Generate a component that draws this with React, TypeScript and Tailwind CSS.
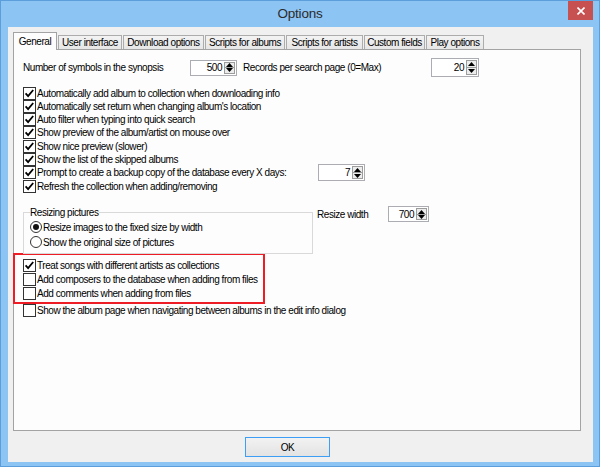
import type { ReactNode } from 'react';

function CheckBox({ checked }: { checked?: boolean }) {
  return (
    <svg width="13" height="13" viewBox="0 0 13 13" className="shrink-0">
      <rect x="0.5" y="0.5" width="12" height="12" fill="#fff" stroke="#333" />
      {checked && <path d="M2.6 6.4 L5.1 9.1 L10.2 3" fill="none" stroke="#000" strokeWidth="1.8" />}
    </svg>
  );
}

function Radio({ checked }: { checked?: boolean }) {
  return (
    <svg width="12" height="12" viewBox="0 0 12 12" className="shrink-0">
      <circle cx="6" cy="6" r="5.5" fill="#fff" stroke="#333" />
      {checked && <circle cx="6" cy="6" r="3" fill="#111" />}
    </svg>
  );
}

function Spin({ value, className }: { value: string; className: string }) {
  return (
    <div className={`flex shrink-0 border border-[#abadb3] bg-white ${className}`}>
      <span className="flex flex-1 items-center justify-end pr-[2px]">{value}</span>
      <div className="my-[1px] mr-[1px] flex w-[11px] flex-col border border-[#9c9c9c]">
        <div className="flex flex-1 items-center justify-center bg-[#ececec]">
          <svg width="7" height="4" viewBox="0 0 7 4"><path d="M0 4 L3.5 0 L7 4 Z" fill="#000" /></svg>
        </div>
        <div className="h-[1px] bg-[#9c9c9c]" />
        <div className="flex flex-1 items-center justify-center bg-[#ececec]">
          <svg width="7" height="4" viewBox="0 0 7 4"><path d="M0 0 L3.5 4 L7 0 Z" fill="#000" /></svg>
        </div>
      </div>
    </div>
  );
}

function CheckRow({ checked, children, h = 'h-[13.3px]' }: { checked?: boolean; children: ReactNode; h?: string }) {
  return (
    <div className={`flex items-center gap-[1px] ${h}`}>
      <CheckBox checked={checked} />
      <span className="whitespace-nowrap">{children}</span>
    </div>
  );
}

const tabs = [
  { label: 'User interface', w: 'w-[64px]' },
  { label: 'Download options', w: 'w-[81px]' },
  { label: 'Scripts for albums', w: 'w-[80px]' },
  { label: 'Scripts for artists', w: 'w-[77px]' },
  { label: 'Custom fields', w: 'w-[61px]' },
  { label: 'Play options', w: 'w-[58px]' },
];

export default function App() {
  return (
    <div className="h-[469px] w-[600px] bg-white font-['Liberation_Sans',Arial,sans-serif] text-[10px] tracking-[-0.45px] text-black">
      <div className="flex h-[467px] w-[600px] flex-col border border-[#5c9ddc] bg-[#8cc4f4]">
        {/* title bar */}
        <div className="flex h-[26px] shrink-0">
          <div className="w-[31px]" />
          <div className="flex flex-1 items-center justify-center text-[13.5px] tracking-[-0.2px] text-[#2b2b2b]">
            Options
          </div>
          <button className="mr-[6px] flex h-[19px] w-[25px] items-center justify-center bg-[#c75050]">
            <svg width="8" height="8" viewBox="0 0 8 8">
              <path d="M0.5 0.5 L7.5 7.5 M7.5 0.5 L0.5 7.5" stroke="#fff" strokeWidth="1.6" />
            </svg>
          </button>
        </div>

        {/* client area */}
        <div className="ml-[7px] h-[435px] w-[585px] shrink-0 bg-[#f0f0f0] pl-[5px] pt-[5px]">
          <div className="flex h-[17px] items-end">
            <div className="relative z-10 -mb-[1px] flex h-[18px] w-[44px] items-center justify-center border border-b-0 border-[#a3a3a3] bg-[#fdfdfd] pb-[1px]">
              General
            </div>
            {tabs.map((t) => (
              <div
                key={t.label}
                className={`ml-[1px] flex h-[14px] items-center justify-center border border-b-0 border-[#acacac] bg-gradient-to-b from-[#f3f3f3] to-[#e6e6e6] whitespace-nowrap ${t.w}`}
              >
                {t.label}
              </div>
            ))}
          </div>

          <div className="h-[382px] w-[568px] border border-[#a3a3a3] bg-[#fdfdfd] pl-[9px] pt-[8px]">
            <div className="flex h-[19px] items-center">
              <span className="w-[167px] whitespace-nowrap">Number of symbols in the synopsis</span>
              <Spin value="500" className="h-[16px] w-[47px]" />
              <span className="ml-[6px] w-[188px] whitespace-nowrap">Records per search page (0=Max)</span>
              <Spin value="20" className="h-[19px] w-[48px]" />
            </div>

            <div className="mt-[9.4px]">
              <CheckRow checked>Automatically add album to collection when downloading info</CheckRow>
              <CheckRow checked>Automatically set return when changing album's location</CheckRow>
              <CheckRow checked>Auto filter when typing into quick search</CheckRow>
              <CheckRow checked>Show preview of the album/artist on mouse over</CheckRow>
              <CheckRow checked>Show nice preview (slower)</CheckRow>
              <CheckRow checked>Show the list of the skipped albums</CheckRow>
              <div className="flex h-[13.3px] items-center">
                <div className="flex w-[295px] items-center gap-[1px]">
                  <CheckBox checked />
                  <span className="whitespace-nowrap">Prompt to create a backup copy of the database every X days:</span>
                </div>
                <Spin value="7" className="h-[17px] w-[47px]" />
              </div>
              <CheckRow checked>Refresh the collection when adding/removing</CheckRow>
            </div>

            <div className="mt-[13px] flex items-start">
              <fieldset className="w-[290px] border border-[#d9d9d9] px-[6px] pb-[3px]">
                <legend className="leading-[13px]">Resizing pictures</legend>
                <div className="pt-[1px]">
                  <div className="flex h-[15px] items-center gap-[1px]">
                    <Radio checked />
                    <span className="whitespace-nowrap">Resize images to the fixed size by width</span>
                  </div>
                  <div className="flex h-[15px] items-center gap-[1px]">
                    <Radio />
                    <span className="whitespace-nowrap">Show the original size of pictures</span>
                  </div>
                </div>
              </fieldset>
              <div className="ml-[4px] flex h-[17px] items-center">
                <span className="w-[71px] whitespace-nowrap">Resize width</span>
                <Spin value="700" className="h-[16px] w-[41px]" />
              </div>
            </div>

            <div className="-ml-[10px] -mt-[1px] w-[252px] border-2 border-[#ee1c24] pb-[1px] pl-[8px] pt-[4px]">
              <CheckRow checked h="h-[14px]">Treat songs with different artists as collections</CheckRow>
              <CheckRow h="h-[14px]">Add composers to the database when adding from files</CheckRow>
              <CheckRow h="h-[14px]">Add comments when adding from files</CheckRow>
            </div>
            <CheckRow h="h-[14px]">Show the album page when navigating between albums in the edit info dialog</CheckRow>
          </div>

          <button className="ml-[232px] mt-[6px] flex h-[20px] w-[85px] items-center justify-center border border-[#3c9ef5] bg-gradient-to-b from-[#f2f2f2] to-[#e3e3e3]">
            OK
          </button>
        </div>
      </div>
    </div>
  );
}
